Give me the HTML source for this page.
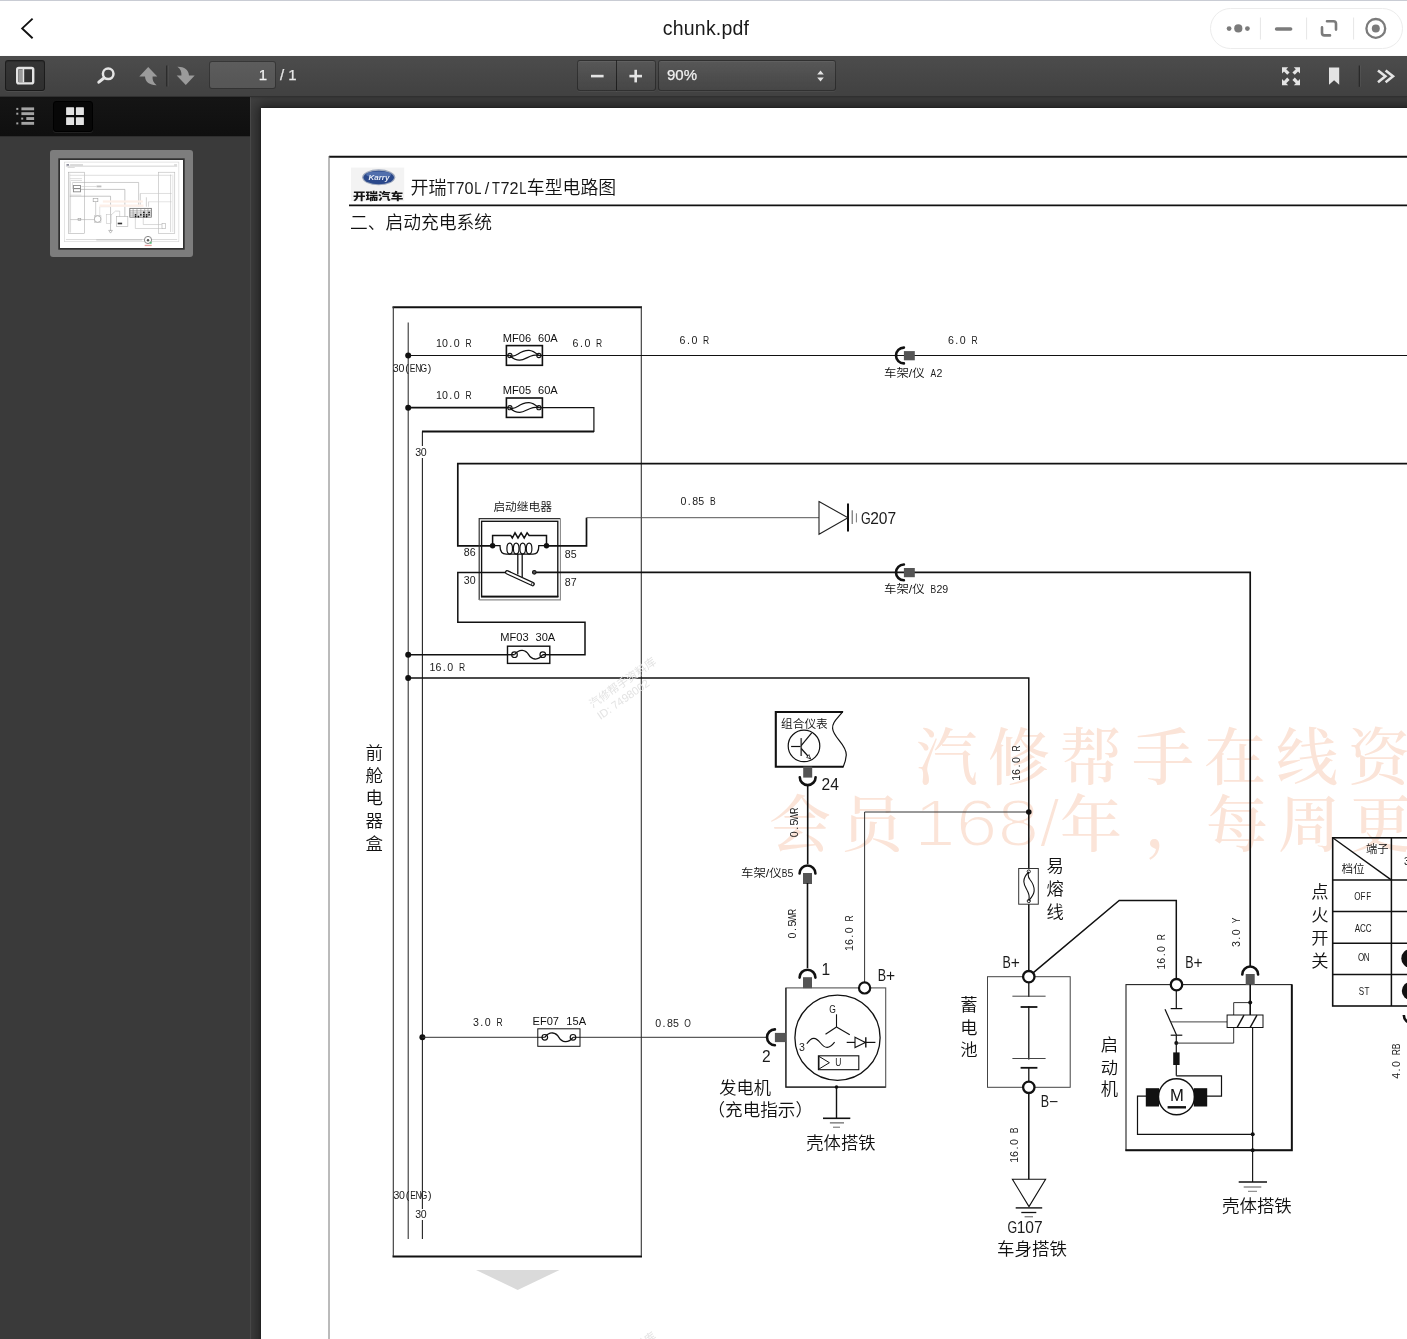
<!DOCTYPE html>
<html lang="zh-CN"><head><meta charset="utf-8"><title>chunk.pdf</title>
<style>
html,body{margin:0;padding:0}
body{width:1407px;height:1339px;overflow:hidden;background:#404040;position:relative;font-family:"Liberation Sans","Noto Sans CJK SC",sans-serif}
#top,#tb{will-change:transform}
#top{position:absolute;left:0;top:0;width:1407px;height:56px;background:#fff;border-top:1px solid #c9ccd4;box-sizing:border-box}
#title{position:absolute;left:2.5px;width:100%;top:15px;text-align:center;font-size:19.5px;line-height:24px;color:#1a1a1a;letter-spacing:.2px}
#capsule{position:absolute;left:1210px;top:7px;width:193px;height:41px;border:1px solid #ececec;border-radius:21px;box-sizing:border-box}
#tb{position:absolute;left:0;top:56px;width:1407px;height:40px;background:linear-gradient(#4c4c4c,#414141);box-shadow:0 1px 0 #303030,0 1px 2px rgba(0,0,0,.3);z-index:3}
#sbtb{position:absolute;left:0;top:96px;width:250px;height:40px;background:linear-gradient(#151515,#0f0f0f);border-bottom:1px solid #2e2e2e;z-index:2}
#sb{position:absolute;left:0;top:137px;width:250px;height:1202px;background:#3a3a3a;z-index:2}
#edge{position:absolute;left:250px;top:96px;width:1px;height:1243px;background:rgba(255,255,255,.07);z-index:2}
#page{position:absolute;left:261px;top:108px;width:1160px;height:1250px;background:#fff;box-shadow:0 0 13px 4px rgba(0,0,0,.5),0 0 2px rgba(0,0,0,.5)}
#dia{position:absolute;left:0;top:0;width:1407px;height:1339px;z-index:1;will-change:transform;opacity:.999}
.btn{position:absolute;box-sizing:border-box;border-radius:3px}
.tog{background:rgba(0,0,0,.28);border:1px solid rgba(0,0,0,.45);box-shadow:inset 0 1px 1px rgba(0,0,0,.2),0 1px 0 rgba(255,255,255,.06)}
.pill{background:linear-gradient(rgba(255,255,255,.07),rgba(255,255,255,.02));border:1px solid rgba(0,0,0,.38);box-shadow:inset 0 1px 0 rgba(255,255,255,.06),0 1px 0 rgba(255,255,255,.05)}
#pn,#pc,#zs{-webkit-text-stroke:.25px currentColor}
#pn{position:absolute;left:209px;top:5px;width:67px;height:28px;box-sizing:border-box;border-radius:3px;background:rgba(255,255,255,.10);border:1px solid rgba(0,0,0,.4);color:#f2f2f2;font-size:15px;line-height:25px;text-align:right;padding-right:8px}
#pc{position:absolute;left:280px;top:5px;font-size:15px;line-height:27px;color:#e8e8e8}
#zs{position:absolute;left:658px;top:4.4px;width:178px;height:30.2px;color:#f0f0f0;font-size:15px;line-height:28px;padding-left:8px}
#thsel,#th{z-index:2}
#thsel{position:absolute;left:50px;top:150px;width:143px;height:107px;border-radius:3px;background:#7d7d7d}
#th{position:absolute;left:60px;top:160px;width:123px;height:88px;background:#fff;box-shadow:0 0 0 1.7px #303030}
#ui{position:absolute;left:0;top:0;width:1407px;height:1339px;z-index:4;pointer-events:none}
</style></head><body>
<div id="top"><div id="title">chunk.pdf</div><div id="capsule"></div></div>
<div id="tb">
 <div class="btn tog" style="left:5px;top:4px;width:40px;height:31px"></div>
 <div id="pn">1</div><div id="pc">/ 1</div>
 <div class="btn pill" style="left:577px;top:4.4px;width:40px;height:30.2px;border-radius:3px 0 0 3px"></div>
 <div class="btn pill" style="left:616px;top:4.4px;width:40px;height:30.2px;border-radius:0 3px 3px 0"></div>
 <div class="btn pill" id="zs">90%</div>
</div>
<div id="sbtb"><div class="btn" style="left:53px;top:5px;width:40px;height:31px;background:#070707;border:1px solid #000;box-shadow:0 1px 0 rgba(255,255,255,.08)"></div></div>
<div id="sb"></div><div id="edge"></div>
<div id="thsel"></div><div id="th"></div>
<div id="page"></div>
<svg id="dia" viewBox="0 0 1407 1339" width="1407" height="1339">
<defs><clipPath id="pg"><rect x="261" y="108" width="1146" height="1231"/></clipPath></defs>
<g clip-path="url(#pg)">
<text x="947" y="780" font-family='"Liberation Serif","Noto Serif CJK SC",serif' font-size="62" fill="#fbe4d8" text-anchor="middle" font-weight="500">汽</text>
<text x="1019" y="780" font-family='"Liberation Serif","Noto Serif CJK SC",serif' font-size="62" fill="#fbe4d8" text-anchor="middle" font-weight="500">修</text>
<text x="1091" y="780" font-family='"Liberation Serif","Noto Serif CJK SC",serif' font-size="62" fill="#fbe4d8" text-anchor="middle" font-weight="500">帮</text>
<text x="1163" y="780" font-family='"Liberation Serif","Noto Serif CJK SC",serif' font-size="62" fill="#fbe4d8" text-anchor="middle" font-weight="500">手</text>
<text x="1235" y="780" font-family='"Liberation Serif","Noto Serif CJK SC",serif' font-size="62" fill="#fbe4d8" text-anchor="middle" font-weight="500">在</text>
<text x="1307" y="780" font-family='"Liberation Serif","Noto Serif CJK SC",serif' font-size="62" fill="#fbe4d8" text-anchor="middle" font-weight="500">线</text>
<text x="1379" y="780" font-family='"Liberation Serif","Noto Serif CJK SC",serif' font-size="62" fill="#fbe4d8" text-anchor="middle" font-weight="500">资</text>
<text x="800" y="847" font-family='"Liberation Serif","Noto Serif CJK SC",serif' font-size="62" fill="#fbe4d8" text-anchor="middle" font-weight="500">会</text>
<text x="872" y="847" font-family='"Liberation Serif","Noto Serif CJK SC",serif' font-size="62" fill="#fbe4d8" text-anchor="middle" font-weight="500">员</text>
<text x="914" y="846" font-family='"Liberation Sans","Noto Sans CJK SC",sans-serif' font-size="66" fill="#fbe4d8" stroke="#fff" stroke-width="2.2" textLength="146" lengthAdjust="spacingAndGlyphs">168/</text>
<text x="1091" y="847" font-family='"Liberation Serif","Noto Serif CJK SC",serif' font-size="62" fill="#fbe4d8" text-anchor="middle" font-weight="500">年</text>
<text x="1176" y="847" font-family='"Liberation Serif","Noto Serif CJK SC",serif' font-size="62" fill="#fbe4d8" text-anchor="middle" font-weight="500">，</text>
<text x="1237" y="847" font-family='"Liberation Serif","Noto Serif CJK SC",serif' font-size="62" fill="#fbe4d8" text-anchor="middle" font-weight="500">每</text>
<text x="1309" y="847" font-family='"Liberation Serif","Noto Serif CJK SC",serif' font-size="62" fill="#fbe4d8" text-anchor="middle" font-weight="500">周</text>
<text x="1381" y="847" font-family='"Liberation Serif","Noto Serif CJK SC",serif' font-size="62" fill="#fbe4d8" text-anchor="middle" font-weight="500">更</text>
<line x1="329" y1="156.7" x2="1407" y2="156.7" stroke="#111" stroke-width="2" stroke-linecap="butt"/>
<line x1="329" y1="156" x2="329" y2="1339" stroke="#777" stroke-width="1" stroke-linecap="butt"/>
<rect x="351" y="167.6" width="53.2" height="33.6" fill="#f3f3f3"/>
<ellipse cx="378.7" cy="177.3" rx="16.6" ry="8" fill="#9fa9bd"/>
<ellipse cx="378.7" cy="177.5" rx="15.3" ry="6.8" fill="#2a488b"/>
<ellipse cx="378.7" cy="174.6" rx="12.5" ry="3.2" fill="#5f7cb8" opacity=".75"/>
<text x="378.9" y="179.9" font-family='"Liberation Sans","Noto Sans CJK SC",sans-serif' font-size="7.6" fill="#e9eef8" text-anchor="middle" textLength="21" lengthAdjust="spacingAndGlyphs" font-weight="700" font-style="italic">Karry</text>
<text x="353" y="199.7" font-family='"Liberation Sans","Noto Sans CJK SC",sans-serif' font-size="10.4" fill="#151515" text-anchor="start" textLength="50.2" lengthAdjust="spacingAndGlyphs" font-weight="900">开瑞汽车</text>
<text x="410.4" y="193.7" font-family='"Liberation Sans","Noto Sans CJK SC",sans-serif' font-size="17.9" fill="#111" text-anchor="start" textLength="36" lengthAdjust="spacingAndGlyphs" font-weight="350">开瑞</text>
<text x="459.9 468.9 486.9 504.9 513.9" y="193.7" font-family='"Liberation Sans","Noto Sans CJK SC",sans-serif' font-size="16.2" fill="#1a1a1a" text-anchor="middle">70/72</text><text x="446.94" y="193.7" font-family='"Liberation Sans","Noto Sans CJK SC",sans-serif' font-size="16.2" fill="#1a1a1a" textLength="7.92" lengthAdjust="spacingAndGlyphs">T</text><text x="474.3" y="193.7" font-family='"Liberation Sans","Noto Sans CJK SC",sans-serif' font-size="16.2" fill="#1a1a1a" textLength="7.21" lengthAdjust="spacingAndGlyphs">L</text><text x="491.94" y="193.7" font-family='"Liberation Sans","Noto Sans CJK SC",sans-serif' font-size="16.2" fill="#1a1a1a" textLength="7.92" lengthAdjust="spacingAndGlyphs">T</text><text x="519.3" y="193.7" font-family='"Liberation Sans","Noto Sans CJK SC",sans-serif' font-size="16.2" fill="#1a1a1a" textLength="7.21" lengthAdjust="spacingAndGlyphs">L</text>
<text x="526.8" y="193.7" font-family='"Liberation Sans","Noto Sans CJK SC",sans-serif' font-size="17.9" fill="#111" text-anchor="start" textLength="89.4" lengthAdjust="spacingAndGlyphs" font-weight="350">车型电路图</text>
<line x1="349" y1="205.4" x2="1407" y2="205.4" stroke="#111" stroke-width="1.6" stroke-linecap="butt"/>
<text x="349.9" y="229.3" font-family='"Liberation Sans","Noto Sans CJK SC",sans-serif' font-size="17.75" fill="#111" text-anchor="start" textLength="142" lengthAdjust="spacingAndGlyphs" font-weight="350">二、启动充电系统</text>
<line x1="392.5" y1="307.2" x2="642" y2="307.2" stroke="#111" stroke-width="2" stroke-linecap="butt"/>
<line x1="392.5" y1="1256.5" x2="642" y2="1256.5" stroke="#111" stroke-width="2" stroke-linecap="butt"/>
<line x1="393.3" y1="307" x2="393.3" y2="1256" stroke="#333" stroke-width="1.1" stroke-linecap="butt"/>
<line x1="641.3" y1="307" x2="641.3" y2="1256" stroke="#333" stroke-width="1.1" stroke-linecap="butt"/>
<line x1="408.2" y1="322.5" x2="408.2" y2="1239" stroke="#222" stroke-width="1" stroke-linecap="butt"/>
<line x1="422.4" y1="431.5" x2="422.4" y2="1239" stroke="#222" stroke-width="1.1" stroke-linecap="butt"/>
<circle cx="408.2" cy="355.5" r="3" fill="#111" stroke="#111" stroke-width="0"/>
<line x1="408.2" y1="355.5" x2="1407" y2="355.5" stroke="#111" stroke-width="1.2" stroke-linecap="butt"/>
<rect x="506.4" y="345.6" width="36.0" height="19.7" fill="#fff" stroke="#111" stroke-width="1.6"/>
<line x1="506.4" y1="355.5" x2="509.9" y2="355.5" stroke="#111" stroke-width="1.2" stroke-linecap="butt"/>
<line x1="538.9" y1="355.5" x2="542.4" y2="355.5" stroke="#111" stroke-width="1.2" stroke-linecap="butt"/>
<circle cx="509.9" cy="355.5" r="2.1" fill="none" stroke="#111" stroke-width="1.1"/>
<circle cx="538.9" cy="355.5" r="2.1" fill="none" stroke="#111" stroke-width="1.1"/>
<g transform="translate(509.9,355.5) rotate(0.0)" fill="none" stroke="#111" stroke-width="1.2"><path d="M0.0,0.0 C2.9,1.4 5.22,0.6 8.12,-1.4 C12.18,-4.4 15.95,-5.2 19.14,-5.1 C23.2,-4.9 26.1,-2.4 29.0,0.0"/><path d="M0.0,0.0 C2.32,2.4 5.8,4.8 9.86,4.7 C14.5,4.6 17.98,1.0 23.2,-0.1 C25.23,-0.5 27.26,-0.3 29.0,0.0"/></g>
<text x="438.95 444.85 450.75 456.65" y="346.8" font-family='"Liberation Sans","Noto Sans CJK SC",sans-serif' font-size="10.62" fill="#1a1a1a" text-anchor="middle">10.0</text><text x="465.38" y="346.8" font-family='"Liberation Sans","Noto Sans CJK SC",sans-serif' font-size="10.62" fill="#1a1a1a" textLength="6.14" lengthAdjust="spacingAndGlyphs">R</text>
<text x="502.8" y="341.5" font-family='"Liberation Sans","Noto Sans CJK SC",sans-serif' font-size="11.1" fill="#111" text-anchor="start">MF06</text>
<text x="538.0" y="341.5" font-family='"Liberation Sans","Noto Sans CJK SC",sans-serif' font-size="11.1" fill="#111" text-anchor="start">60A</text>
<text x="575.55 581.45 587.35" y="346.8" font-family='"Liberation Sans","Noto Sans CJK SC",sans-serif' font-size="10.62" fill="#1a1a1a" text-anchor="middle">6.0</text><text x="596.08" y="346.8" font-family='"Liberation Sans","Noto Sans CJK SC",sans-serif' font-size="10.62" fill="#1a1a1a" textLength="6.14" lengthAdjust="spacingAndGlyphs">R</text>
<text x="682.55 688.45 694.35" y="344" font-family='"Liberation Sans","Noto Sans CJK SC",sans-serif' font-size="10.62" fill="#1a1a1a" text-anchor="middle">6.0</text><text x="703.08" y="344" font-family='"Liberation Sans","Noto Sans CJK SC",sans-serif' font-size="10.62" fill="#1a1a1a" textLength="6.14" lengthAdjust="spacingAndGlyphs">R</text>
<text x="950.95 956.85 962.75" y="344" font-family='"Liberation Sans","Noto Sans CJK SC",sans-serif' font-size="10.62" fill="#1a1a1a" text-anchor="middle">6.0</text><text x="971.48" y="344" font-family='"Liberation Sans","Noto Sans CJK SC",sans-serif' font-size="10.62" fill="#1a1a1a" textLength="6.14" lengthAdjust="spacingAndGlyphs">R</text>
<text x="395.8 401.4 407.0 429.4" y="372.3" font-family='"Liberation Sans","Noto Sans CJK SC",sans-serif' font-size="10.64" fill="#1a1a1a" text-anchor="middle">30()</text><text x="409.76" y="372.3" font-family='"Liberation Sans","Noto Sans CJK SC",sans-serif' font-size="10.64" fill="#1a1a1a" textLength="5.68" lengthAdjust="spacingAndGlyphs">E</text><text x="415.13" y="372.3" font-family='"Liberation Sans","Noto Sans CJK SC",sans-serif' font-size="10.64" fill="#1a1a1a" textLength="6.15" lengthAdjust="spacingAndGlyphs">N</text><text x="420.49" y="372.3" font-family='"Liberation Sans","Noto Sans CJK SC",sans-serif' font-size="10.64" fill="#1a1a1a" textLength="6.62" lengthAdjust="spacingAndGlyphs">G</text>
<path d="M903.9,347.6 A7.9,7.9 0 0 0 903.9,363.4" fill="none" stroke="#111" stroke-width="2.6" stroke-linecap="round" stroke-linejoin="miter"/>
<rect x="903.9" y="351.1" width="10.9" height="9.2" fill="#555"/>
<text x="884" y="377" font-family='"Liberation Sans","Noto Sans CJK SC",sans-serif' font-size="11.6" fill="#111" text-anchor="start" textLength="40.6" lengthAdjust="spacingAndGlyphs" font-weight="350">车架/仪</text>
<text x="939.35" y="377" font-family='"Liberation Sans","Noto Sans CJK SC",sans-serif' font-size="10.62" fill="#1a1a1a" text-anchor="middle">2</text><text x="930.62" y="377" font-family='"Liberation Sans","Noto Sans CJK SC",sans-serif' font-size="10.62" fill="#1a1a1a" textLength="5.67" lengthAdjust="spacingAndGlyphs">A</text>
<circle cx="408.2" cy="407.7" r="3" fill="#111" stroke="#111" stroke-width="0"/>
<line x1="408.2" y1="407.7" x2="506" y2="407.7" stroke="#111" stroke-width="1.8" stroke-linecap="butt"/>
<polyline points="542,407.7 593.9,407.7 593.9,431.5 422.4,431.5" fill="none" stroke="#111" stroke-width="1.2" stroke-linejoin="miter"/>
<line x1="422" y1="431.5" x2="594" y2="431.5" stroke="#111" stroke-width="1.8" stroke-linecap="butt"/>
<rect x="506.4" y="398" width="36.0" height="19.4" fill="#fff" stroke="#111" stroke-width="1.6"/>
<line x1="506.4" y1="407.7" x2="509.9" y2="407.7" stroke="#111" stroke-width="1.2" stroke-linecap="butt"/>
<line x1="538.9" y1="407.7" x2="542.4" y2="407.7" stroke="#111" stroke-width="1.2" stroke-linecap="butt"/>
<circle cx="509.9" cy="407.7" r="2.1" fill="none" stroke="#111" stroke-width="1.1"/>
<circle cx="538.9" cy="407.7" r="2.1" fill="none" stroke="#111" stroke-width="1.1"/>
<g transform="translate(509.9,407.7) rotate(0.0)" fill="none" stroke="#111" stroke-width="1.2"><path d="M0.0,0.0 C2.9,1.4 5.22,0.6 8.12,-1.4 C12.18,-4.4 15.95,-5.2 19.14,-5.1 C23.2,-4.9 26.1,-2.4 29.0,0.0"/><path d="M0.0,0.0 C2.32,2.4 5.8,4.8 9.86,4.7 C14.5,4.6 17.98,1.0 23.2,-0.1 C25.23,-0.5 27.26,-0.3 29.0,0.0"/></g>
<text x="438.95 444.85 450.75 456.65" y="399.3" font-family='"Liberation Sans","Noto Sans CJK SC",sans-serif' font-size="10.62" fill="#1a1a1a" text-anchor="middle">10.0</text><text x="465.38" y="399.3" font-family='"Liberation Sans","Noto Sans CJK SC",sans-serif' font-size="10.62" fill="#1a1a1a" textLength="6.14" lengthAdjust="spacingAndGlyphs">R</text>
<text x="502.8" y="393.5" font-family='"Liberation Sans","Noto Sans CJK SC",sans-serif' font-size="11.1" fill="#111" text-anchor="start">MF05</text>
<text x="538.0" y="393.5" font-family='"Liberation Sans","Noto Sans CJK SC",sans-serif' font-size="11.1" fill="#111" text-anchor="start">60A</text>
<rect x="414" y="446" width="14" height="12" fill="#fff"/>
<text x="418.1 423.7" y="455.8" font-family='"Liberation Sans","Noto Sans CJK SC",sans-serif' font-size="10.64" fill="#1a1a1a" text-anchor="middle">30</text>
<polyline points="1407,463.6 457.8,463.6 457.8,545.8 492.6,545.8" fill="none" stroke="#111" stroke-width="1.7" stroke-linejoin="miter"/>
<polyline points="479.2,599.9 479.2,518.7 560.4,518.7" fill="none" stroke="#333" stroke-width="1.2" stroke-linejoin="miter"/>
<polyline points="479.2,599.9 560.4,599.9 560.4,518.7" fill="none" stroke="#8a8a8a" stroke-width="1.1" stroke-linejoin="miter"/>
<rect x="481.6" y="521.3" width="76.2" height="75.2" fill="none" stroke="#111" stroke-width="1.35"/>
<line x1="481" y1="596.6" x2="558.4" y2="596.6" stroke="#111" stroke-width="1.9" stroke-linecap="butt"/>
<text x="493.4" y="511" font-family='"Liberation Sans","Noto Sans CJK SC",sans-serif' font-size="11.7" fill="#111" text-anchor="start" textLength="58.6" lengthAdjust="spacingAndGlyphs" font-weight="350">启动继电器</text>
<circle cx="492.6" cy="545.7" r="2.7" fill="#111" stroke="#111" stroke-width="0"/>
<circle cx="546.5" cy="545.7" r="2.7" fill="#111" stroke="#111" stroke-width="0"/>
<path d="M492.6,545.7 V535.4 H510.7 L512.3,538 L515,532.9 L518,538 L521.1,532.9 L524.2,538 L527.1,532.9 L529.1,535.4 H546.5 V545.7" fill="none" stroke="#111" stroke-width="1.5" stroke-linecap="butt" stroke-linejoin="miter"/>
<path d="M492.6,545.7 H500 C500,551 501.6,554.1 506.3,554.1 H533 C537.4,554.1 538.8,551 538.8,545.7 H546.5" fill="none" stroke="#111" stroke-width="1.3" stroke-linecap="butt" stroke-linejoin="miter"/>
<ellipse cx="509.7" cy="548.6" rx="2.8" ry="5.5" fill="none" stroke="#111" stroke-width="1.2"/>
<ellipse cx="516.2" cy="548.6" rx="2.8" ry="5.5" fill="none" stroke="#111" stroke-width="1.2"/>
<ellipse cx="522.7" cy="548.6" rx="2.8" ry="5.5" fill="none" stroke="#111" stroke-width="1.2"/>
<ellipse cx="529.1" cy="548.6" rx="2.8" ry="5.5" fill="none" stroke="#111" stroke-width="1.2"/>
<line x1="517.8" y1="554.1" x2="517.8" y2="574.6" stroke="#111" stroke-width="1.3" stroke-linecap="butt"/>
<line x1="522.2" y1="554.1" x2="522.2" y2="577" stroke="#111" stroke-width="1.3" stroke-linecap="butt"/>
<path d="M507.2,572.3 L532.6,584.1" fill="none" stroke="#111" stroke-width="4.4" stroke-linecap="round" stroke-linejoin="miter"/>
<path d="M507.2,572.3 L532.6,584.1" fill="none" stroke="#fff" stroke-width="2" stroke-linecap="round" stroke-linejoin="miter"/>
<circle cx="532.7" cy="584.1" r="1.3" fill="none" stroke="#333" stroke-width="0.8"/>
<circle cx="534.3" cy="572.3" r="1.8" fill="#555" stroke="#111" stroke-width="1.1"/>
<polyline points="546.7,545.8 586.5,545.8 586.5,517.7" fill="none" stroke="#111" stroke-width="1.7" stroke-linejoin="miter"/>
<line x1="586.5" y1="517.7" x2="819" y2="517.7" stroke="#555" stroke-width="1" stroke-linecap="butt"/>
<polygon points="819,501.6 848,517.7 819,534.2" fill="none" stroke="#222" stroke-width="1.1" stroke-linejoin="miter"/>
<line x1="848" y1="503.4" x2="848" y2="531.5" stroke="#111" stroke-width="2" stroke-linecap="butt"/>
<line x1="852.2" y1="510.3" x2="852.2" y2="524" stroke="#555" stroke-width="1" stroke-linecap="butt"/>
<line x1="856.4" y1="513.3" x2="856.4" y2="522.4" stroke="#777" stroke-width="1" stroke-linecap="butt"/>
<text x="874.48 883.12 891.77" y="524" font-family='"Liberation Sans","Noto Sans CJK SC",sans-serif' font-size="15.57" fill="#1a1a1a" text-anchor="middle">207</text><text x="860.98" y="524" font-family='"Liberation Sans","Noto Sans CJK SC",sans-serif' font-size="15.57" fill="#1a1a1a" textLength="9.69" lengthAdjust="spacingAndGlyphs">G</text>
<text x="683.45 689.35 695.25 701.15" y="504.5" font-family='"Liberation Sans","Noto Sans CJK SC",sans-serif' font-size="10.62" fill="#1a1a1a" text-anchor="middle">0.85</text><text x="710.12" y="504.5" font-family='"Liberation Sans","Noto Sans CJK SC",sans-serif' font-size="10.62" fill="#1a1a1a" textLength="5.67" lengthAdjust="spacingAndGlyphs">B</text>
<polyline points="536,572.4 1250.2,572.4 1250.2,966" fill="none" stroke="#111" stroke-width="1.7" stroke-linejoin="miter"/>
<path d="M903.9,564.5 A7.9,7.9 0 0 0 903.9,580.3" fill="none" stroke="#111" stroke-width="2.6" stroke-linecap="round" stroke-linejoin="miter"/>
<rect x="903.9" y="568.0" width="10.9" height="9.2" fill="#555"/>
<text x="884" y="593" font-family='"Liberation Sans","Noto Sans CJK SC",sans-serif' font-size="11.6" fill="#111" text-anchor="start" textLength="40.6" lengthAdjust="spacingAndGlyphs" font-weight="350">车架/仪</text>
<text x="939.35 945.25" y="593" font-family='"Liberation Sans","Noto Sans CJK SC",sans-serif' font-size="10.62" fill="#1a1a1a" text-anchor="middle">29</text><text x="930.62" y="593" font-family='"Liberation Sans","Noto Sans CJK SC",sans-serif' font-size="10.62" fill="#1a1a1a" textLength="5.67" lengthAdjust="spacingAndGlyphs">B</text>
<polyline points="505.6,572.5 457.8,572.5 457.8,622.3 585,622.3 585,654.7 408.2,654.7" fill="none" stroke="#111" stroke-width="1.5" stroke-linejoin="miter"/>
<text x="466.75 472.65" y="555.8" font-family='"Liberation Sans","Noto Sans CJK SC",sans-serif' font-size="10.62" fill="#1a1a1a" text-anchor="middle">86</text>
<text x="567.75 573.65" y="557.6" font-family='"Liberation Sans","Noto Sans CJK SC",sans-serif' font-size="10.62" fill="#1a1a1a" text-anchor="middle">85</text>
<text x="466.75 472.65" y="584" font-family='"Liberation Sans","Noto Sans CJK SC",sans-serif' font-size="10.62" fill="#1a1a1a" text-anchor="middle">30</text>
<text x="567.75 573.65" y="585.8" font-family='"Liberation Sans","Noto Sans CJK SC",sans-serif' font-size="10.62" fill="#1a1a1a" text-anchor="middle">87</text>
<rect x="507.5" y="646.2" width="42.3" height="17.2" fill="#fff" stroke="#111" stroke-width="1.4"/>
<line x1="507.5" y1="654.7" x2="514.5" y2="654.7" stroke="#111" stroke-width="1.4" stroke-linecap="butt"/>
<line x1="542.8" y1="654.7" x2="549.8" y2="654.7" stroke="#111" stroke-width="1.4" stroke-linecap="butt"/>
<circle cx="514.5" cy="654.7" r="2.8" fill="none" stroke="#111" stroke-width="1.2"/>
<circle cx="542.8" cy="654.7" r="2.8" fill="none" stroke="#111" stroke-width="1.2"/>
<path d="M514.5,654.7 C519.5,648.2 525.65,649.7 528.65,654.7 S537.8,661.2 542.8,654.7" fill="none" stroke="#111" stroke-width="1.3" stroke-linecap="butt" stroke-linejoin="miter"/>
<text x="500.3" y="641" font-family='"Liberation Sans","Noto Sans CJK SC",sans-serif' font-size="11.1" fill="#111" text-anchor="start">MF03</text>
<text x="535.5" y="641" font-family='"Liberation Sans","Noto Sans CJK SC",sans-serif' font-size="11.1" fill="#111" text-anchor="start">30A</text>
<circle cx="408.2" cy="654.7" r="3" fill="#111" stroke="#111" stroke-width="0"/>
<circle cx="408.2" cy="677.9" r="3" fill="#111" stroke="#111" stroke-width="0"/>
<text x="432.45 438.35 444.25 450.15" y="670.7" font-family='"Liberation Sans","Noto Sans CJK SC",sans-serif' font-size="10.62" fill="#1a1a1a" text-anchor="middle">16.0</text><text x="458.88" y="670.7" font-family='"Liberation Sans","Noto Sans CJK SC",sans-serif' font-size="10.62" fill="#1a1a1a" textLength="6.14" lengthAdjust="spacingAndGlyphs">R</text>
<polyline points="408.2,677.9 1028.8,677.9 1028.8,868.5" fill="none" stroke="#111" stroke-width="1.5" stroke-linejoin="miter"/>
<g transform="translate(622.5,682.6) rotate(-35)" font-family='"Liberation Sans","Noto Sans CJK SC",sans-serif' fill="#e3e3e3" text-anchor="middle" font-size="11.2"><text x="0" y="4">汽修帮手资料库</text><text x="-9" y="18">ID: 7498002</text></g>
<g transform="translate(622.5,1357) rotate(-35)" font-family='"Liberation Sans","Noto Sans CJK SC",sans-serif' fill="#e3e3e3" text-anchor="middle" font-size="11.2"><text x="0" y="4">汽修帮手资料库</text><text x="-9" y="18">ID: 7498002</text></g>
<text x="374.3" y="758.9" font-family='"Liberation Sans","Noto Sans CJK SC",sans-serif' font-size="17.5" fill="#111" text-anchor="middle" font-weight="350">前</text>
<text x="374.3" y="781.9" font-family='"Liberation Sans","Noto Sans CJK SC",sans-serif' font-size="17.5" fill="#111" text-anchor="middle" font-weight="350">舱</text>
<text x="374.3" y="804.4" font-family='"Liberation Sans","Noto Sans CJK SC",sans-serif' font-size="17.5" fill="#111" text-anchor="middle" font-weight="350">电</text>
<text x="374.3" y="826.9" font-family='"Liberation Sans","Noto Sans CJK SC",sans-serif' font-size="17.5" fill="#111" text-anchor="middle" font-weight="350">器</text>
<text x="374.3" y="849.7" font-family='"Liberation Sans","Noto Sans CJK SC",sans-serif' font-size="17.5" fill="#111" text-anchor="middle" font-weight="350">盒</text>
<circle cx="422.4" cy="1037.3" r="3" fill="#111" stroke="#111" stroke-width="0"/>
<line x1="422.4" y1="1037.3" x2="766" y2="1037.3" stroke="#333" stroke-width="1" stroke-linecap="butt"/>
<rect x="537.8" y="1028.8" width="42.2" height="17.5" fill="#fff" stroke="#111" stroke-width="1"/>
<line x1="537.8" y1="1037.3" x2="544.8" y2="1037.3" stroke="#111" stroke-width="1" stroke-linecap="butt"/>
<line x1="573" y1="1037.3" x2="580" y2="1037.3" stroke="#111" stroke-width="1" stroke-linecap="butt"/>
<circle cx="544.8" cy="1037.3" r="2.8" fill="none" stroke="#111" stroke-width="1.2"/>
<circle cx="573" cy="1037.3" r="2.8" fill="none" stroke="#111" stroke-width="1.2"/>
<path d="M544.8,1037.3 C549.8,1030.8 555.9,1032.3 558.9,1037.3 S568,1043.8 573,1037.3" fill="none" stroke="#111" stroke-width="1.3" stroke-linecap="butt" stroke-linejoin="miter"/>
<text x="475.95 481.85 487.75" y="1025.8" font-family='"Liberation Sans","Noto Sans CJK SC",sans-serif' font-size="10.62" fill="#1a1a1a" text-anchor="middle">3.0</text><text x="496.48" y="1025.8" font-family='"Liberation Sans","Noto Sans CJK SC",sans-serif' font-size="10.62" fill="#1a1a1a" textLength="6.14" lengthAdjust="spacingAndGlyphs">R</text>
<text x="532.5" y="1025.2" font-family='"Liberation Sans","Noto Sans CJK SC",sans-serif' font-size="11.1" fill="#111" text-anchor="start">EF07</text>
<text x="566.3" y="1025.2" font-family='"Liberation Sans","Noto Sans CJK SC",sans-serif' font-size="11.1" fill="#111" text-anchor="start">15A</text>
<text x="658.15 664.05 669.95 675.85" y="1027.2" font-family='"Liberation Sans","Noto Sans CJK SC",sans-serif' font-size="10.62" fill="#1a1a1a" text-anchor="middle">0.85</text><text x="684.35" y="1027.2" font-family='"Liberation Sans","Noto Sans CJK SC",sans-serif' font-size="10.62" fill="#1a1a1a" textLength="6.61" lengthAdjust="spacingAndGlyphs">O</text>
<text x="396.38 401.93 407.48 429.68" y="1198.7" font-family='"Liberation Sans","Noto Sans CJK SC",sans-serif' font-size="10.54" fill="#1a1a1a" text-anchor="middle">30()</text><text x="410.21" y="1198.7" font-family='"Liberation Sans","Noto Sans CJK SC",sans-serif' font-size="10.54" fill="#1a1a1a" textLength="5.62" lengthAdjust="spacingAndGlyphs">E</text><text x="415.53" y="1198.7" font-family='"Liberation Sans","Noto Sans CJK SC",sans-serif' font-size="10.54" fill="#1a1a1a" textLength="6.09" lengthAdjust="spacingAndGlyphs">N</text><text x="420.85" y="1198.7" font-family='"Liberation Sans","Noto Sans CJK SC",sans-serif' font-size="10.54" fill="#1a1a1a" textLength="6.56" lengthAdjust="spacingAndGlyphs">G</text>
<rect x="414.5" y="1209" width="13" height="11" fill="#fff"/>
<text x="418.17 423.72" y="1217.7" font-family='"Liberation Sans","Noto Sans CJK SC",sans-serif' font-size="10.54" fill="#1a1a1a" text-anchor="middle">30</text>
<polygon points="476,1270 559.5,1270 517.7,1290" fill="#dadada" stroke="#111" stroke-width="0" stroke-linejoin="miter"/>
<path d="M843,712 H775.8 V766.8 H843" fill="none" stroke="#111" stroke-width="2.1" stroke-linecap="butt" stroke-linejoin="miter"/>
<path d="M843,711.4 C837,719 832,722.5 832.6,728.5 C833.5,738 846.5,744 846.3,755 C846,760 844.5,763.8 843,767.4" fill="none" stroke="#111" stroke-width="1.2" stroke-linecap="butt" stroke-linejoin="miter"/>
<text x="781" y="728" font-family='"Liberation Sans","Noto Sans CJK SC",sans-serif' font-size="11.7" fill="#111" text-anchor="start" textLength="46.8" lengthAdjust="spacingAndGlyphs" font-weight="350">组合仪表</text>
<circle cx="804" cy="745.9" r="15.8" fill="none" stroke="#111" stroke-width="1.2"/>
<line x1="791.1" y1="746.5" x2="800.8" y2="746.5" stroke="#111" stroke-width="1.2" stroke-linecap="butt"/>
<line x1="801.2" y1="738.1" x2="801.2" y2="756" stroke="#555" stroke-width="1.7" stroke-linecap="butt"/>
<line x1="801.2" y1="745.6" x2="811.7" y2="732.9" stroke="#111" stroke-width="1.2" stroke-linecap="butt"/>
<line x1="801.2" y1="748.5" x2="810.6" y2="759" stroke="#111" stroke-width="1.2" stroke-linecap="butt"/>
<polygon points="810.3,758.7 806.6,757.4 809,754.6" fill="#fff" stroke="#111" stroke-width="0.8" stroke-linejoin="miter"/>
<path d="M799.8000000000001,777.2 A7.9,7.9 0 0 0 815.6,777.2" fill="none" stroke="#111" stroke-width="2.6" stroke-linecap="round" stroke-linejoin="miter"/>
<rect x="803.2" y="766.6" width="9" height="11" fill="#555"/>
<text x="825.93 834.58" y="789.7" font-family='"Liberation Sans","Noto Sans CJK SC",sans-serif' font-size="15.57" fill="#1a1a1a" text-anchor="middle">24</text>
<line x1="807.7" y1="785.5" x2="807.7" y2="864" stroke="#111" stroke-width="1.6" stroke-linecap="butt"/>
<g transform="translate(797.6,837.2) rotate(-90)"><text x="2.95 8.85 14.75" y="0" font-family='"Liberation Sans","Noto Sans CJK SC",sans-serif' font-size="10.62" fill="#1a1a1a" text-anchor="middle">0.5</text><text x="16.64" y="0" font-family='"Liberation Sans","Noto Sans CJK SC",sans-serif' font-size="10.62" fill="#1a1a1a" textLength="8.02" lengthAdjust="spacingAndGlyphs">W</text><text x="23.48" y="0" font-family='"Liberation Sans","Noto Sans CJK SC",sans-serif' font-size="10.62" fill="#1a1a1a" textLength="6.14" lengthAdjust="spacingAndGlyphs">R</text></g>
<path d="M799.6,873.4 A7.9,7.9 0 0 1 815.4,873.4" fill="none" stroke="#111" stroke-width="2.6" stroke-linecap="round" stroke-linejoin="miter"/>
<rect x="803.0" y="873" width="9" height="11" fill="#555"/>
<text x="741" y="876.6" font-family='"Liberation Sans","Noto Sans CJK SC",sans-serif' font-size="11.6" fill="#111" text-anchor="start" textLength="40.6" lengthAdjust="spacingAndGlyphs" font-weight="350">车架/仪</text>
<text x="790.45" y="876.6" font-family='"Liberation Sans","Noto Sans CJK SC",sans-serif' font-size="10.62" fill="#1a1a1a" text-anchor="middle">5</text><text x="781.72" y="876.6" font-family='"Liberation Sans","Noto Sans CJK SC",sans-serif' font-size="10.62" fill="#1a1a1a" textLength="5.67" lengthAdjust="spacingAndGlyphs">B</text>
<line x1="807.5" y1="883" x2="807.5" y2="968" stroke="#111" stroke-width="1.6" stroke-linecap="butt"/>
<g transform="translate(795.8,938.4) rotate(-90)"><text x="2.95 8.85 14.75" y="0" font-family='"Liberation Sans","Noto Sans CJK SC",sans-serif' font-size="10.62" fill="#1a1a1a" text-anchor="middle">0.5</text><text x="16.64" y="0" font-family='"Liberation Sans","Noto Sans CJK SC",sans-serif' font-size="10.62" fill="#1a1a1a" textLength="8.02" lengthAdjust="spacingAndGlyphs">W</text><text x="23.48" y="0" font-family='"Liberation Sans","Noto Sans CJK SC",sans-serif' font-size="10.62" fill="#1a1a1a" textLength="6.14" lengthAdjust="spacingAndGlyphs">R</text></g>
<path d="M799.6,977.6 A7.9,7.9 0 0 1 815.4,977.6" fill="none" stroke="#111" stroke-width="2.6" stroke-linecap="round" stroke-linejoin="miter"/>
<rect x="803.0" y="977.2" width="9" height="11" fill="#555"/>
<text x="825.83" y="974.6" font-family='"Liberation Sans","Noto Sans CJK SC",sans-serif' font-size="15.57" fill="#1a1a1a" text-anchor="middle">1</text>
<rect x="785.9" y="987.9" width="99.8" height="99.2" fill="none" stroke="#555" stroke-width="1.1"/>
<polyline points="785.9,987.9 785.9,1087.1 885.7,1087.1" fill="none" stroke="#222" stroke-width="1.2" stroke-linejoin="miter"/>
<circle cx="837.5" cy="1037.7" r="42.6" fill="none" stroke="#111" stroke-width="1.3"/>
<polyline points="1028.8,812 864.6,812 864.6,982" fill="none" stroke="#333" stroke-width="1" stroke-linejoin="miter"/>
<circle cx="1028.8" cy="812" r="2.8" fill="#111" stroke="#111" stroke-width="0"/>
<circle cx="864.6" cy="987.9" r="5.6" fill="#fff" stroke="#111" stroke-width="2.2"/>
<text x="890.58" y="980.5" font-family='"Liberation Sans","Noto Sans CJK SC",sans-serif' font-size="15.57" fill="#1a1a1a" text-anchor="middle">+</text><text x="877.77" y="980.5" font-family='"Liberation Sans","Noto Sans CJK SC",sans-serif' font-size="15.57" fill="#1a1a1a" textLength="8.31" lengthAdjust="spacingAndGlyphs">B</text>
<g transform="translate(852.6,951) rotate(-90)"><text x="2.95 8.85 14.75 20.65" y="0" font-family='"Liberation Sans","Noto Sans CJK SC",sans-serif' font-size="10.62" fill="#1a1a1a" text-anchor="middle">16.0</text><text x="29.38" y="0" font-family='"Liberation Sans","Noto Sans CJK SC",sans-serif' font-size="10.62" fill="#1a1a1a" textLength="6.14" lengthAdjust="spacingAndGlyphs">R</text></g>
<path d="M774.9,1029.3999999999999 A7.9,7.9 0 0 0 774.9,1045.2" fill="none" stroke="#111" stroke-width="2.6" stroke-linecap="round" stroke-linejoin="miter"/>
<rect x="774.9" y="1032.8999999999999" width="10.9" height="9.2" fill="#555"/>
<text x="766.33" y="1061.6" font-family='"Liberation Sans","Noto Sans CJK SC",sans-serif' font-size="15.57" fill="#1a1a1a" text-anchor="middle">2</text>
<text x="829.25" y="1013.1" font-family='"Liberation Sans","Noto Sans CJK SC",sans-serif' font-size="10.62" fill="#1a1a1a" textLength="6.61" lengthAdjust="spacingAndGlyphs">G</text>
<polyline points="836.5,1014.3 836.5,1027" fill="none" stroke="#111" stroke-width="1.1" stroke-linejoin="miter"/>
<line x1="836.5" y1="1027" x2="825.5" y2="1034.2" stroke="#111" stroke-width="1.1" stroke-linecap="butt"/>
<line x1="836.5" y1="1027" x2="849.8" y2="1034.7" stroke="#111" stroke-width="1.1" stroke-linecap="butt"/>
<text x="802.05" y="1051.2" font-family='"Liberation Sans","Noto Sans CJK SC",sans-serif' font-size="10.62" fill="#1a1a1a" text-anchor="middle">3</text>
<path d="M806.8,1043.8 C812,1036 816,1037.5 820.5,1043 S829,1049.5 834.6,1042.2" fill="none" stroke="#111" stroke-width="1.1" stroke-linecap="butt" stroke-linejoin="miter"/>
<line x1="846.7" y1="1042.4" x2="875.4" y2="1042.4" stroke="#111" stroke-width="1.2" stroke-linecap="butt"/>
<polygon points="855,1037.2 865.4,1042.4 855,1047.6" fill="#fff" stroke="#111" stroke-width="1.1" stroke-linejoin="miter"/>
<line x1="865.8" y1="1037.2" x2="865.8" y2="1047.6" stroke="#111" stroke-width="1.4" stroke-linecap="butt"/>
<rect x="818.4" y="1055.8" width="40.4" height="13.9" fill="none" stroke="#111" stroke-width="1.1"/>
<polygon points="819,1056.4 829.4,1062.7 819,1069" fill="none" stroke="#111" stroke-width="1" stroke-linejoin="miter"/>
<text x="835.28" y="1066" font-family='"Liberation Sans","Noto Sans CJK SC",sans-serif' font-size="10.62" fill="#1a1a1a" textLength="6.14" lengthAdjust="spacingAndGlyphs">U</text>
<circle cx="836.5" cy="1087.1" r="1.8" fill="#111" stroke="#111" stroke-width="0"/>
<line x1="836.5" y1="1087.1" x2="836.5" y2="1118.3" stroke="#111" stroke-width="1.4" stroke-linecap="butt"/>
<line x1="823" y1="1118.3" x2="850.3" y2="1118.3" stroke="#111" stroke-width="1.6" stroke-linecap="butt"/>
<line x1="829.9" y1="1122.9" x2="844" y2="1122.9" stroke="#444" stroke-width="1" stroke-linecap="butt"/>
<line x1="833" y1="1127.2" x2="840" y2="1127.2" stroke="#666" stroke-width="1" stroke-linecap="butt"/>
<text x="719.3" y="1094.2" font-family='"Liberation Sans","Noto Sans CJK SC",sans-serif' font-size="17.3" fill="#111" text-anchor="start" textLength="51.8" lengthAdjust="spacingAndGlyphs" font-weight="350">发电机</text>
<text x="707.5" y="1116.4" font-family='"Liberation Sans","Noto Sans CJK SC",sans-serif' font-size="17.3" fill="#111" text-anchor="start" textLength="105.5" lengthAdjust="spacingAndGlyphs" font-weight="350">（充电指示）</text>
<text x="806.3" y="1149.2" font-family='"Liberation Sans","Noto Sans CJK SC",sans-serif' font-size="17.3" fill="#111" text-anchor="start" textLength="69.2" lengthAdjust="spacingAndGlyphs" font-weight="350">壳体搭铁</text>
<rect x="1018.7" y="868.5" width="19.6" height="35.7" fill="none" stroke="#333" stroke-width="1"/>
<circle cx="1028.8" cy="871.5" r="1.6" fill="none" stroke="#111" stroke-width="0.9"/>
<circle cx="1028.8" cy="901" r="1.6" fill="none" stroke="#111" stroke-width="0.9"/>
<g transform="translate(1028.8,872) rotate(90.0)" fill="none" stroke="#111" stroke-width="1.1"><path d="M0.0,0.0 C2.86,1.47 5.15,0.63 8.01,-1.47 C12.01,-4.62 15.73,-5.46 18.88,-5.35 C22.88,-5.15 25.74,-2.52 28.6,0.0"/><path d="M0.0,0.0 C2.29,2.52 5.72,5.04 9.72,4.94 C14.3,4.83 17.73,1.05 22.88,-0.11 C24.88,-0.53 26.88,-0.32 28.6,0.0"/></g>
<line x1="1028.8" y1="904.2" x2="1028.8" y2="971" stroke="#111" stroke-width="1.5" stroke-linecap="butt"/>
<text x="1055.2" y="872.2" font-family='"Liberation Sans","Noto Sans CJK SC",sans-serif' font-size="17.3" fill="#111" text-anchor="middle" font-weight="350">易</text>
<text x="1055.2" y="895.4" font-family='"Liberation Sans","Noto Sans CJK SC",sans-serif' font-size="17.3" fill="#111" text-anchor="middle" font-weight="350">熔</text>
<text x="1055.2" y="917.7" font-family='"Liberation Sans","Noto Sans CJK SC",sans-serif' font-size="17.3" fill="#111" text-anchor="middle" font-weight="350">线</text>
<g transform="translate(1020.2,780.8) rotate(-90)"><text x="2.95 8.85 14.75 20.65" y="0" font-family='"Liberation Sans","Noto Sans CJK SC",sans-serif' font-size="10.62" fill="#1a1a1a" text-anchor="middle">16.0</text><text x="29.38" y="0" font-family='"Liberation Sans","Noto Sans CJK SC",sans-serif' font-size="10.62" fill="#1a1a1a" textLength="6.14" lengthAdjust="spacingAndGlyphs">R</text></g>
<rect x="987.5" y="976.7" width="82.7" height="110.6" fill="none" stroke="#444" stroke-width="1"/>
<line x1="1028.8" y1="982" x2="1028.8" y2="1081.5" stroke="#111" stroke-width="1.3" stroke-linecap="butt"/>
<rect x="1021" y="997" width="16.5" height="9" fill="#fff"/><rect x="1021" y="1059.5" width="16.5" height="8" fill="#fff"/>
<line x1="1012.4" y1="996.2" x2="1045.6" y2="996.2" stroke="#444" stroke-width="1" stroke-linecap="butt"/>
<line x1="1020.6" y1="1007" x2="1037.4" y2="1007" stroke="#111" stroke-width="1.8" stroke-linecap="butt"/>
<line x1="1012.4" y1="1058.5" x2="1045.6" y2="1058.5" stroke="#444" stroke-width="1" stroke-linecap="butt"/>
<line x1="1020.6" y1="1067.8" x2="1037.4" y2="1067.8" stroke="#111" stroke-width="1.8" stroke-linecap="butt"/>
<circle cx="1028.8" cy="976.7" r="5.7" fill="#fff" stroke="#111" stroke-width="2.3"/>
<circle cx="1028.8" cy="1087.3" r="5.7" fill="#fff" stroke="#111" stroke-width="2.3"/>
<text x="1015.38" y="967.8" font-family='"Liberation Sans","Noto Sans CJK SC",sans-serif' font-size="15.57" fill="#1a1a1a" text-anchor="middle">+</text><text x="1002.57" y="967.8" font-family='"Liberation Sans","Noto Sans CJK SC",sans-serif' font-size="15.57" fill="#1a1a1a" textLength="8.31" lengthAdjust="spacingAndGlyphs">B</text>
<text x="1053.47" y="1107.3" font-family='"Liberation Sans","Noto Sans CJK SC",sans-serif' font-size="15.57" fill="#1a1a1a" text-anchor="middle">−</text><text x="1040.67" y="1107.3" font-family='"Liberation Sans","Noto Sans CJK SC",sans-serif' font-size="15.57" fill="#1a1a1a" textLength="8.31" lengthAdjust="spacingAndGlyphs">B</text>
<text x="968.9" y="1011.2" font-family='"Liberation Sans","Noto Sans CJK SC",sans-serif' font-size="17.3" fill="#111" text-anchor="middle" font-weight="350">蓄</text>
<text x="968.9" y="1033.7" font-family='"Liberation Sans","Noto Sans CJK SC",sans-serif' font-size="17.3" fill="#111" text-anchor="middle" font-weight="350">电</text>
<text x="968.9" y="1056.1" font-family='"Liberation Sans","Noto Sans CJK SC",sans-serif' font-size="17.3" fill="#111" text-anchor="middle" font-weight="350">池</text>
<line x1="1028.8" y1="1093" x2="1028.8" y2="1179.2" stroke="#111" stroke-width="1.5" stroke-linecap="butt"/>
<polygon points="1012.4,1179.2 1045.6,1179.2 1029,1206.6" fill="none" stroke="#111" stroke-width="1.1" stroke-linejoin="miter"/>
<line x1="1015.7" y1="1207.9" x2="1042.2" y2="1207.9" stroke="#111" stroke-width="1.4" stroke-linecap="butt"/>
<line x1="1021.3" y1="1212.5" x2="1036.3" y2="1212.5" stroke="#111" stroke-width="1.3" stroke-linecap="butt"/>
<line x1="1024.6" y1="1216.8" x2="1033" y2="1216.8" stroke="#555" stroke-width="1" stroke-linecap="butt"/>
<g transform="translate(1017.9,1162.8) rotate(-90)"><text x="2.95 8.85 14.75 20.65" y="0" font-family='"Liberation Sans","Noto Sans CJK SC",sans-serif' font-size="10.62" fill="#1a1a1a" text-anchor="middle">16.0</text><text x="29.62" y="0" font-family='"Liberation Sans","Noto Sans CJK SC",sans-serif' font-size="10.62" fill="#1a1a1a" textLength="5.67" lengthAdjust="spacingAndGlyphs">B</text></g>
<text x="1020.98 1029.62 1038.28" y="1233.4" font-family='"Liberation Sans","Noto Sans CJK SC",sans-serif' font-size="15.57" fill="#1a1a1a" text-anchor="middle">107</text><text x="1007.48" y="1233.4" font-family='"Liberation Sans","Noto Sans CJK SC",sans-serif' font-size="15.57" fill="#1a1a1a" textLength="9.69" lengthAdjust="spacingAndGlyphs">G</text>
<text x="997" y="1254.6" font-family='"Liberation Sans","Noto Sans CJK SC",sans-serif' font-size="17.5" fill="#111" text-anchor="start" textLength="70" lengthAdjust="spacingAndGlyphs" font-weight="350">车身搭铁</text>
<polyline points="1033.4,972.6 1119.2,900.4 1176.3,900.4 1176.3,978.8" fill="none" stroke="#111" stroke-width="1.5" stroke-linejoin="miter"/>
<rect x="1126" y="984.6" width="165.8" height="165.7" fill="none" stroke="#222" stroke-width="1.1"/>
<polyline points="1125.4,1150.3 1291.8,1150.3 1291.8,984.6" fill="none" stroke="#111" stroke-width="1.9" stroke-linejoin="miter"/>
<circle cx="1176.5" cy="984.7" r="5.7" fill="#fff" stroke="#111" stroke-width="2.3"/>
<text x="1197.97" y="967.8" font-family='"Liberation Sans","Noto Sans CJK SC",sans-serif' font-size="15.57" fill="#1a1a1a" text-anchor="middle">+</text><text x="1185.17" y="967.8" font-family='"Liberation Sans","Noto Sans CJK SC",sans-serif' font-size="15.57" fill="#1a1a1a" textLength="8.31" lengthAdjust="spacingAndGlyphs">B</text>
<g transform="translate(1164.9,969.6) rotate(-90)"><text x="2.95 8.85 14.75 20.65" y="0" font-family='"Liberation Sans","Noto Sans CJK SC",sans-serif' font-size="10.62" fill="#1a1a1a" text-anchor="middle">16.0</text><text x="29.38" y="0" font-family='"Liberation Sans","Noto Sans CJK SC",sans-serif' font-size="10.62" fill="#1a1a1a" textLength="6.14" lengthAdjust="spacingAndGlyphs">R</text></g>
<g transform="translate(1239.6,947) rotate(-90)"><text x="2.95 8.85 14.75" y="0" font-family='"Liberation Sans","Noto Sans CJK SC",sans-serif' font-size="10.62" fill="#1a1a1a" text-anchor="middle">3.0</text><text x="23.72" y="0" font-family='"Liberation Sans","Noto Sans CJK SC",sans-serif' font-size="10.62" fill="#1a1a1a" textLength="5.67" lengthAdjust="spacingAndGlyphs">Y</text></g>
<path d="M1242.3,974.4 A7.9,7.9 0 0 1 1258.1000000000001,974.4" fill="none" stroke="#111" stroke-width="2.6" stroke-linecap="round" stroke-linejoin="miter"/>
<rect x="1245.7" y="974" width="9" height="11" fill="#555"/>
<line x1="1176.3" y1="990" x2="1176.3" y2="1008.6" stroke="#111" stroke-width="1.2" stroke-linecap="butt"/>
<line x1="1170.7" y1="1008.6" x2="1182.3" y2="1008.6" stroke="#111" stroke-width="1.2" stroke-linecap="butt"/>
<line x1="1165" y1="1009.2" x2="1176.5" y2="1035" stroke="#111" stroke-width="1.2" stroke-linecap="butt"/>
<line x1="1170.7" y1="1035.2" x2="1182.3" y2="1035.2" stroke="#111" stroke-width="1.2" stroke-linecap="butt"/>
<line x1="1176.3" y1="1035.2" x2="1176.3" y2="1075.8" stroke="#111" stroke-width="1.2" stroke-linecap="butt"/>
<circle cx="1176.3" cy="1043.1" r="2" fill="#111" stroke="#111" stroke-width="0"/>
<rect x="1173.2" y="1052.4" width="6.4" height="12.6" fill="#111"/>
<polyline points="1176.3,1075.8 1221.5,1075.8 1221.5,1096.2 1207,1096.2" fill="none" stroke="#111" stroke-width="1.2" stroke-linejoin="miter"/>
<circle cx="1176.5" cy="1096.7" r="18" fill="#fff" stroke="#111" stroke-width="1.4"/>
<rect x="1145.8" y="1088.2" width="13.2" height="18.3" fill="#111"/><rect x="1193.8" y="1088.2" width="13.4" height="18.3" fill="#111"/>
<text x="1176.8" y="1101.1" font-family='"Liberation Sans","Noto Sans CJK SC",sans-serif' font-size="16.6" fill="#111" text-anchor="middle">M</text>
<line x1="1167.6" y1="1107.3" x2="1186" y2="1107.3" stroke="#111" stroke-width="2.4" stroke-linecap="butt"/>
<polyline points="1146,1096.2 1137.5,1096.2 1137.5,1134.4 1253,1134.4" fill="none" stroke="#111" stroke-width="1.2" stroke-linejoin="miter"/>
<line x1="1171" y1="1021.9" x2="1227" y2="1021.9" stroke="#444" stroke-width="1" stroke-linecap="butt"/>
<polyline points="1176.3,1043.1 1233.7,1043.1 1233.7,1002.6 1250.2,1002.6" fill="none" stroke="#333" stroke-width="1" stroke-linejoin="miter"/>
<line x1="1250.2" y1="984.4" x2="1250.2" y2="1015" stroke="#111" stroke-width="1.6" stroke-linecap="butt"/>
<circle cx="1250.2" cy="1002.6" r="2" fill="#111" stroke="#111" stroke-width="0"/>
<rect x="1227.1" y="1015" width="35.9" height="12.5" fill="#fff" stroke="#111" stroke-width="1"/>
<line x1="1237.2" y1="1027.3" x2="1244" y2="1015.2" stroke="#111" stroke-width="1.4" stroke-linecap="butt"/>
<line x1="1250.2" y1="1027.3" x2="1257" y2="1015.2" stroke="#111" stroke-width="1.4" stroke-linecap="butt"/>
<line x1="1252.6" y1="1027.5" x2="1252.6" y2="1181.9" stroke="#1a1a1a" stroke-width="1.2" stroke-linecap="butt"/>
<circle cx="1252.7" cy="1134.3" r="2" fill="#111" stroke="#111" stroke-width="0"/>
<circle cx="1252.7" cy="1150.3" r="2" fill="#111" stroke="#111" stroke-width="0"/>
<line x1="1238.7" y1="1182" x2="1267" y2="1182" stroke="#111" stroke-width="1.5" stroke-linecap="butt"/>
<line x1="1243.7" y1="1187" x2="1261.3" y2="1187" stroke="#555" stroke-width="1" stroke-linecap="butt"/>
<line x1="1248" y1="1191.3" x2="1257" y2="1191.3" stroke="#777" stroke-width="1" stroke-linecap="butt"/>
<text x="1222" y="1212.4" font-family='"Liberation Sans","Noto Sans CJK SC",sans-serif' font-size="17.4" fill="#111" text-anchor="start" textLength="69.8" lengthAdjust="spacingAndGlyphs" font-weight="350">壳体搭铁</text>
<text x="1109.3" y="1051.3" font-family='"Liberation Sans","Noto Sans CJK SC",sans-serif' font-size="17.3" fill="#111" text-anchor="middle" font-weight="350">启</text>
<text x="1109.3" y="1073.6" font-family='"Liberation Sans","Noto Sans CJK SC",sans-serif' font-size="17.3" fill="#111" text-anchor="middle" font-weight="350">动</text>
<text x="1109.3" y="1095.4" font-family='"Liberation Sans","Noto Sans CJK SC",sans-serif' font-size="17.3" fill="#111" text-anchor="middle" font-weight="350">机</text>
<rect x="1332.7" y="837.8" width="87.3" height="168.2" fill="none" stroke="#111" stroke-width="1.6"/>
<line x1="1391.4" y1="837.8" x2="1391.4" y2="1006" stroke="#111" stroke-width="1.5" stroke-linecap="butt"/>
<line x1="1332.7" y1="879.9" x2="1420" y2="879.9" stroke="#111" stroke-width="1.5" stroke-linecap="butt"/>
<line x1="1332.7" y1="911.4" x2="1420" y2="911.4" stroke="#111" stroke-width="1.5" stroke-linecap="butt"/>
<line x1="1332.7" y1="943.3" x2="1420" y2="943.3" stroke="#111" stroke-width="1.5" stroke-linecap="butt"/>
<line x1="1332.7" y1="974.6" x2="1420" y2="974.6" stroke="#111" stroke-width="1.5" stroke-linecap="butt"/>
<line x1="1332.7" y1="837.8" x2="1391.2" y2="879.9" stroke="#111" stroke-width="1.4" stroke-linecap="butt"/>
<text x="1366" y="853.4" font-family='"Liberation Sans","Noto Sans CJK SC",sans-serif' font-size="11.4" fill="#111" text-anchor="start" textLength="22.6" lengthAdjust="spacingAndGlyphs" font-weight="350">端子</text>
<text x="1341.5" y="873" font-family='"Liberation Sans","Noto Sans CJK SC",sans-serif' font-size="11.6" fill="#111" text-anchor="start" textLength="23.2" lengthAdjust="spacingAndGlyphs" font-weight="350">档位</text>
<text x="1354.26" y="900" font-family='"Liberation Sans","Noto Sans CJK SC",sans-serif' font-size="10.08" fill="#1a1a1a" textLength="6.27" lengthAdjust="spacingAndGlyphs">O</text><text x="1360.54" y="900" font-family='"Liberation Sans","Noto Sans CJK SC",sans-serif' font-size="10.08" fill="#1a1a1a" textLength="4.93" lengthAdjust="spacingAndGlyphs">F</text><text x="1366.14" y="900" font-family='"Liberation Sans","Noto Sans CJK SC",sans-serif' font-size="10.08" fill="#1a1a1a" textLength="4.93" lengthAdjust="spacingAndGlyphs">F</text>
<text x="1354.71" y="931.5" font-family='"Liberation Sans","Noto Sans CJK SC",sans-serif' font-size="10.08" fill="#1a1a1a" textLength="5.38" lengthAdjust="spacingAndGlyphs">A</text><text x="1360.09" y="931.5" font-family='"Liberation Sans","Noto Sans CJK SC",sans-serif' font-size="10.08" fill="#1a1a1a" textLength="5.82" lengthAdjust="spacingAndGlyphs">C</text><text x="1365.69" y="931.5" font-family='"Liberation Sans","Noto Sans CJK SC",sans-serif' font-size="10.08" fill="#1a1a1a" textLength="5.82" lengthAdjust="spacingAndGlyphs">C</text>
<text x="1357.96" y="961.3" font-family='"Liberation Sans","Noto Sans CJK SC",sans-serif' font-size="10.08" fill="#1a1a1a" textLength="6.27" lengthAdjust="spacingAndGlyphs">O</text><text x="1363.79" y="961.3" font-family='"Liberation Sans","Noto Sans CJK SC",sans-serif' font-size="10.08" fill="#1a1a1a" textLength="5.82" lengthAdjust="spacingAndGlyphs">N</text>
<text x="1358.71" y="995" font-family='"Liberation Sans","Noto Sans CJK SC",sans-serif' font-size="10.08" fill="#1a1a1a" textLength="5.38" lengthAdjust="spacingAndGlyphs">S</text><text x="1364.54" y="995" font-family='"Liberation Sans","Noto Sans CJK SC",sans-serif' font-size="10.08" fill="#1a1a1a" textLength="4.93" lengthAdjust="spacingAndGlyphs">T</text>
<text x="1320" y="898.0" font-family='"Liberation Sans","Noto Sans CJK SC",sans-serif' font-size="17.3" fill="#111" text-anchor="middle" font-weight="350">点</text>
<text x="1320" y="921.2" font-family='"Liberation Sans","Noto Sans CJK SC",sans-serif' font-size="17.3" fill="#111" text-anchor="middle" font-weight="350">火</text>
<text x="1320" y="943.9" font-family='"Liberation Sans","Noto Sans CJK SC",sans-serif' font-size="17.3" fill="#111" text-anchor="middle" font-weight="350">开</text>
<text x="1320" y="966.8" font-family='"Liberation Sans","Noto Sans CJK SC",sans-serif' font-size="17.3" fill="#111" text-anchor="middle" font-weight="350">关</text>
<circle cx="1410.6" cy="958.4" r="9.3" fill="#111" stroke="#111" stroke-width="0"/>
<circle cx="1410.8" cy="990.9" r="9" fill="#111" stroke="#111" stroke-width="0"/>
<text x="1406.8" y="865.2" font-family='"Liberation Sans","Noto Sans CJK SC",sans-serif' font-size="10.08" fill="#1a1a1a" text-anchor="middle">3</text>
<path d="M1403.8,1015 A8.2,8.2 0 0 0 1420.2,1015" fill="none" stroke="#111" stroke-width="2.6" stroke-linecap="butt" stroke-linejoin="miter"/>
<g transform="translate(1400,1078.8) rotate(-90)"><text x="2.95 8.85 14.75" y="0" font-family='"Liberation Sans","Noto Sans CJK SC",sans-serif' font-size="10.62" fill="#1a1a1a" text-anchor="middle">4.0</text><text x="23.48" y="0" font-family='"Liberation Sans","Noto Sans CJK SC",sans-serif' font-size="10.62" fill="#1a1a1a" textLength="6.14" lengthAdjust="spacingAndGlyphs">R</text><text x="29.62" y="0" font-family='"Liberation Sans","Noto Sans CJK SC",sans-serif' font-size="10.62" fill="#1a1a1a" textLength="5.67" lengthAdjust="spacingAndGlyphs">B</text></g>
</g>
</svg>
<svg id="ui" viewBox="0 0 1407 1339" width="1407" height="1339">
<polyline points="32.6,18.6 22.2,28.4 32.6,38.2" fill="none" stroke="#111" stroke-width="1.9"/>
<circle cx="1229.1" cy="28.6" r="2.4" fill="#7b7b7b"/><circle cx="1238.3" cy="28.4" r="4.1" fill="#7b7b7b"/><circle cx="1247.4" cy="28.6" r="2.4" fill="#7b7b7b"/>
<line x1="1260.4" y1="17.5" x2="1260.4" y2="39.5" stroke="#e6e6e6" stroke-width="1"/>
<line x1="1306.6" y1="17.5" x2="1306.6" y2="39.5" stroke="#e6e6e6" stroke-width="1"/>
<line x1="1353.6" y1="17.5" x2="1353.6" y2="39.5" stroke="#e6e6e6" stroke-width="1"/>
<line x1="1276.6" y1="29" x2="1290.6" y2="29" stroke="#7b7b7b" stroke-width="3.6" stroke-linecap="round"/>
<path d="M1327,21.2 H1333.5 Q1336,21.2 1336,23.7 V29.6" fill="none" stroke="#7b7b7b" stroke-width="2.6" stroke-linecap="round"/>
<path d="M1322,27.4 V33 Q1322,35.4 1324.4,35.4 H1330" fill="none" stroke="#7b7b7b" stroke-width="2.6" stroke-linecap="round"/>
<circle cx="1375.8" cy="28.4" r="9.4" fill="none" stroke="#7b7b7b" stroke-width="2.3"/><circle cx="1375.8" cy="28.4" r="4" fill="#7b7b7b"/>
<rect x="17.2" y="68" width="16" height="15.4" rx="1.6" fill="none" stroke="#e4e4e4" stroke-width="2.4"/><rect x="18.6" y="69.4" width="4.2" height="12.6" fill="#9a9a9a"/><rect x="22.6" y="69" width="1.6" height="13.4" fill="#e4e4e4"/>
<circle cx="108.2" cy="73.8" r="5.3" fill="none" stroke="#e4e4e4" stroke-width="2.5"/><line x1="104" y1="78" x2="98.8" y2="82.2" stroke="#e4e4e4" stroke-width="3" stroke-linecap="round"/>
<path d="M148.2,67 L157.3,76.6 H152.6 C152.2,80 153.5,83 156.6,85.2 C150,85.4 145.3,82.4 145,76.6 H139.3 Z" fill="#9b9b9b"/>
<path d="M185.8,85 L176.7,75.4 H181.4 C181.8,72 180.5,69 177.4,66.8 C184,66.6 188.7,69.6 189,75.4 H194.7 Z" fill="#9b9b9b"/>
<line x1="166.8" y1="65.5" x2="166.8" y2="86.5" stroke="#2a2a2a" stroke-width="1.4"/><line x1="168" y1="65.5" x2="168" y2="86.5" stroke="rgba(255,255,255,.08)" stroke-width="1"/>
<rect x="591" y="74.8" width="12.6" height="2.6" fill="#e4e4e4"/><rect x="629.4" y="74.8" width="12.6" height="2.6" fill="#e4e4e4"/><rect x="634.4" y="69.8" width="2.6" height="12.6" fill="#e4e4e4"/>
<path d="M820.5,70.6 l3.3,4 h-6.6 z M820.5,81.6 l3.3,-4 h-6.6 z" fill="#e4e4e4"/>
<path d="M1282,67.2 L1288.2,67.2 L1286.2,69.2 L1289.6,72.4 L1287.2,74.8 L1284,71.4 L1282,73.4 Z" fill="#e4e4e4"/>
<path d="M1300,67.2 L1293.8,67.2 L1295.8,69.2 L1292.4,72.4 L1294.8,74.8 L1298,71.4 L1300,73.4 Z" fill="#e4e4e4"/>
<path d="M1282,85.2 L1288.2,85.2 L1286.2,83.2 L1289.6,80.0 L1287.2,77.60000000000001 L1284,81.0 L1282,79.0 Z" fill="#e4e4e4"/>
<path d="M1300,85.2 L1293.8,85.2 L1295.8,83.2 L1292.4,80.0 L1294.8,77.60000000000001 L1298,81.0 L1300,79.0 Z" fill="#e4e4e4"/>
<path d="M1329,67.4 H1339.2 V84.8 L1334.1,80.2 L1329,84.8 Z" fill="#e4e4e4"/>
<line x1="1359.4" y1="65.5" x2="1359.4" y2="86.8" stroke="#2a2a2a" stroke-width="1.4"/><line x1="1360.6" y1="65.5" x2="1360.6" y2="86.8" stroke="rgba(255,255,255,.08)" stroke-width="1"/>
<path d="M1378,70.4 L1385.4,76.3 L1378,82.2 M1385.6,70.4 L1393,76.3 L1385.6,82.2" fill="none" stroke="#e4e4e4" stroke-width="2.6"/>
<rect x="21.4" y="107.4" width="12.700000000000003" height="2.9" fill="#a4a4a4"/><rect x="16.3" y="107.9" width="2" height="2" fill="#a4a4a4"/>
<rect x="21.4" y="112.2" width="12.700000000000003" height="2.9" fill="#a4a4a4"/><rect x="16.3" y="112.7" width="2" height="2" fill="#a4a4a4"/>
<rect x="26.3" y="117.1" width="7.800000000000001" height="2.9" fill="#a4a4a4"/><rect x="21.2" y="117.6" width="2" height="2" fill="#a4a4a4"/>
<rect x="21.4" y="121.9" width="12.700000000000003" height="2.9" fill="#a4a4a4"/><rect x="16.3" y="122.4" width="2" height="2" fill="#a4a4a4"/>
<rect x="66.1" y="107.3" width="8" height="7.8" rx=".6" fill="#e2e2e2"/>
<rect x="66.1" y="117.2" width="8" height="7.8" rx=".6" fill="#e2e2e2"/>
<rect x="75.9" y="107.3" width="8" height="7.8" rx=".6" fill="#e2e2e2"/>
<rect x="75.9" y="117.2" width="8" height="7.8" rx=".6" fill="#e2e2e2"/>
<rect x="64.28" y="162.08" width="114.58" height="79.65" fill="none" stroke="#cfcfcf" stroke-width="0.55"/>
<line x1="65.93" y1="166.15" x2="177.2" y2="166.15" stroke="#aaa" stroke-width="0.55"/>
<rect x="66.48" y="164.17" width="2.53" height="1.43" fill="#778" stroke="none" stroke-width="0"/>
<rect x="70.12" y="164.39" width="12.89" height="1.1" fill="#c4c4c4" stroke="none" stroke-width="0"/>
<rect x="67.58" y="167.03" width="7.16" height="0.77" fill="#d2d2d2" stroke="none" stroke-width="0"/>
<rect x="174.12" y="164.39" width="2.86" height="1.1" fill="#c8c8c8" stroke="none" stroke-width="0"/>
<rect x="68.47" y="172.21" width="16.19" height="61.47" fill="none" stroke="#aaa" stroke-width="0.55"/>
<rect x="158.47" y="172.21" width="16.3" height="61.47" fill="none" stroke="#b4b4b4" stroke-width="0.55"/>
<line x1="69.79" y1="175.3" x2="171.69" y2="175.3" stroke="#c4c4c4" stroke-width="0.55"/>
<line x1="69.79" y1="173.42" x2="69.79" y2="232.58" stroke="#c4c4c4" stroke-width="0.55"/>
<line x1="70.56" y1="181.36" x2="70.56" y2="232.58" stroke="#c9c9c9" stroke-width="0.55"/>
<line x1="69.79" y1="178.6" x2="81.91" y2="178.6" stroke="#c4c4c4" stroke-width="0.55"/>
<line x1="70.56" y1="180.47" x2="81.91" y2="180.47" stroke="#c4c4c4" stroke-width="0.55"/>
<line x1="72.54" y1="182.46" x2="138.64" y2="182.46" stroke="#a5a5a5" stroke-width="0.55"/>
<line x1="138.64" y1="182.46" x2="138.64" y2="206.69" stroke="#a5a5a5" stroke-width="0.55"/>
<line x1="72.54" y1="182.46" x2="72.54" y2="189.07" stroke="#c4c4c4" stroke-width="0.55"/>
<rect x="73.42" y="185.54" width="7.05" height="6.28" fill="none" stroke="#888" stroke-width="0.9"/>
<line x1="73.86" y1="188.63" x2="80.03" y2="188.63" stroke="#777" stroke-width="1"/>
<line x1="81.36" y1="186.53" x2="96.23" y2="186.53" stroke="#c5c5c5" stroke-width="0.55"/>
<rect x="96.56" y="185.54" width="4.85" height="1.76" fill="#bdbdbd" stroke="none" stroke-width="0"/>
<line x1="80.8" y1="189.4" x2="124.87" y2="189.4" stroke="#999" stroke-width="0.55"/>
<line x1="124.87" y1="189.4" x2="124.87" y2="216.61" stroke="#999" stroke-width="0.55"/>
<line x1="69.79" y1="196.23" x2="110.55" y2="196.23" stroke="#999" stroke-width="0.55"/>
<line x1="110.55" y1="196.23" x2="110.55" y2="230.93" stroke="#999" stroke-width="0.55"/>
<line x1="69.79" y1="195.13" x2="81.36" y2="195.13" stroke="#c4c4c4" stroke-width="0.55"/>
<rect x="93.14" y="198.65" width="4.74" height="3.08" fill="none" stroke="#999" stroke-width="0.55"/>
<line x1="95.68" y1="201.74" x2="95.68" y2="215.51" stroke="#aaa" stroke-width="0.55"/>
<line x1="99.75" y1="206.69" x2="99.75" y2="215.51" stroke="#ccc" stroke-width="0.55"/>
<line x1="99.75" y1="206.69" x2="110.55" y2="206.69" stroke="#ccc" stroke-width="0.55"/>
<circle cx="97.66" cy="219.03" r="3.3" fill="none" stroke="#999" stroke-width=".7"/>
<rect x="94.36" y="215.73" width="6.61" height="6.61" fill="none" stroke="#bbb" stroke-width="0.55"/>
<line x1="70.34" y1="219.58" x2="94.03" y2="219.58" stroke="#aaa" stroke-width="0.55"/>
<rect x="78.05" y="218.59" width="2.75" height="1.87" fill="none" stroke="#999" stroke-width="0.55"/>
<rect x="106.25" y="214.63" width="4.85" height="8.81" fill="none" stroke="#c4c4c4" stroke-width="0.55"/>
<path d="M108.68,230.38 L112.42,230.38 L110.55,233.13 Z" fill="none" stroke="#999" stroke-width=".6"/>
<line x1="111.1" y1="214.96" x2="115.51" y2="211.1" stroke="#bbb" stroke-width="0.55"/>
<line x1="115.51" y1="211.1" x2="119.69" y2="211.1" stroke="#bbb" stroke-width="0.55"/>
<line x1="119.69" y1="211.1" x2="119.69" y2="216.61" stroke="#bbb" stroke-width="0.55"/>
<rect x="116.39" y="216.39" width="11.46" height="10.14" fill="none" stroke="#aaa" stroke-width="0.55"/>
<rect x="117.71" y="222.67" width="4.41" height="1.65" fill="#333" stroke="none" stroke-width="0"/>
<rect x="129.83" y="208.35" width="21.48" height="8.81" fill="none" stroke="#666" stroke-width="0.8"/>
<line x1="129.83" y1="210.88" x2="151.31" y2="210.88" stroke="#777" stroke-width="0.6"/>
<line x1="129.83" y1="212.97" x2="151.31" y2="212.97" stroke="#777" stroke-width="0.6"/>
<line x1="129.83" y1="215.07" x2="151.31" y2="215.07" stroke="#777" stroke-width="0.6"/>
<line x1="133.13" y1="208.35" x2="133.13" y2="217.16" stroke="#888" stroke-width="0.6"/>
<line x1="136.99" y1="208.35" x2="136.99" y2="217.16" stroke="#888" stroke-width="0.6"/>
<line x1="140.85" y1="208.35" x2="140.85" y2="217.16" stroke="#888" stroke-width="0.6"/>
<line x1="144.7" y1="208.35" x2="144.7" y2="217.16" stroke="#888" stroke-width="0.6"/>
<line x1="148.01" y1="208.35" x2="148.01" y2="217.16" stroke="#888" stroke-width="0.6"/>
<circle cx="135.56" cy="214.74" r="0.85" fill="#111"/>
<circle cx="140.85" cy="214.74" r="0.85" fill="#111"/>
<circle cx="143.82" cy="212.42" r="0.85" fill="#111"/>
<circle cx="143.82" cy="214.74" r="0.85" fill="#111"/>
<circle cx="146.58" cy="214.74" r="0.85" fill="#111"/>
<circle cx="149.11" cy="212.42" r="0.85" fill="#111"/>
<circle cx="149.11" cy="214.74" r="0.85" fill="#111"/>
<circle cx="135.56" cy="216.61" r="0.85" fill="#111"/>
<circle cx="143.82" cy="216.61" r="0.85" fill="#111"/>
<circle cx="146.58" cy="216.61" r="0.85" fill="#111"/>
<circle cx="138.42" cy="216.61" r="0.85" fill="#111"/>
<line x1="140.3" y1="193.47" x2="171.69" y2="193.47" stroke="#c4c4c4" stroke-width="0.55"/>
<line x1="140.3" y1="193.47" x2="140.3" y2="206.69" stroke="#aaa" stroke-width="0.55"/>
<line x1="146.36" y1="197.33" x2="146.36" y2="206.69" stroke="#aaa" stroke-width="0.55"/>
<line x1="148.56" y1="201.74" x2="171.69" y2="201.74" stroke="#d0d0d0" stroke-width="0.55"/>
<line x1="148.56" y1="201.74" x2="148.56" y2="206.69" stroke="#bbb" stroke-width="0.55"/>
<line x1="135.34" y1="217.71" x2="135.34" y2="228.51" stroke="#bbb" stroke-width="0.55"/>
<line x1="135.34" y1="228.51" x2="161.78" y2="228.51" stroke="#bbb" stroke-width="0.55"/>
<line x1="143.27" y1="217.71" x2="143.27" y2="224.54" stroke="#bbb" stroke-width="0.55"/>
<line x1="143.27" y1="224.54" x2="161.78" y2="224.54" stroke="#bbb" stroke-width="0.55"/>
<rect x="162.0" y="223.44" width="3.64" height="5.29" fill="none" stroke="#aaa" stroke-width="0.55"/>
<line x1="170.59" y1="174.53" x2="170.59" y2="232.03" stroke="#bbb" stroke-width="0.55"/>
<line x1="172.8" y1="174.53" x2="172.8" y2="232.03" stroke="#d0d0d0" stroke-width="0.55"/>
<rect x="102.84" y="200.41" width="40" height="2.2" fill="#fdf0e9"/><rect x="99.53" y="204.49" width="44" height="2.4" fill="#fdf0e9"/>
<line x1="65.93" y1="239.52" x2="177.2" y2="239.52" stroke="#bbb" stroke-width="0.55"/>
<rect x="96.23" y="239.08" width="45.72" height="1.32" fill="#c9c9c9" stroke="none" stroke-width="0"/>
<circle cx="148.01" cy="239.97" r="3.6" fill="#fff" stroke="#888" stroke-width="1"/><circle cx="148.01" cy="240.19" r="1.2" fill="#555"/><rect x="144.7" y="244.81" width="7" height="1.3" fill="#e9a0a0"/><rect x="149.66" y="241.73" width="2" height="2" fill="#5cb979"/>
</svg>
</body></html>
